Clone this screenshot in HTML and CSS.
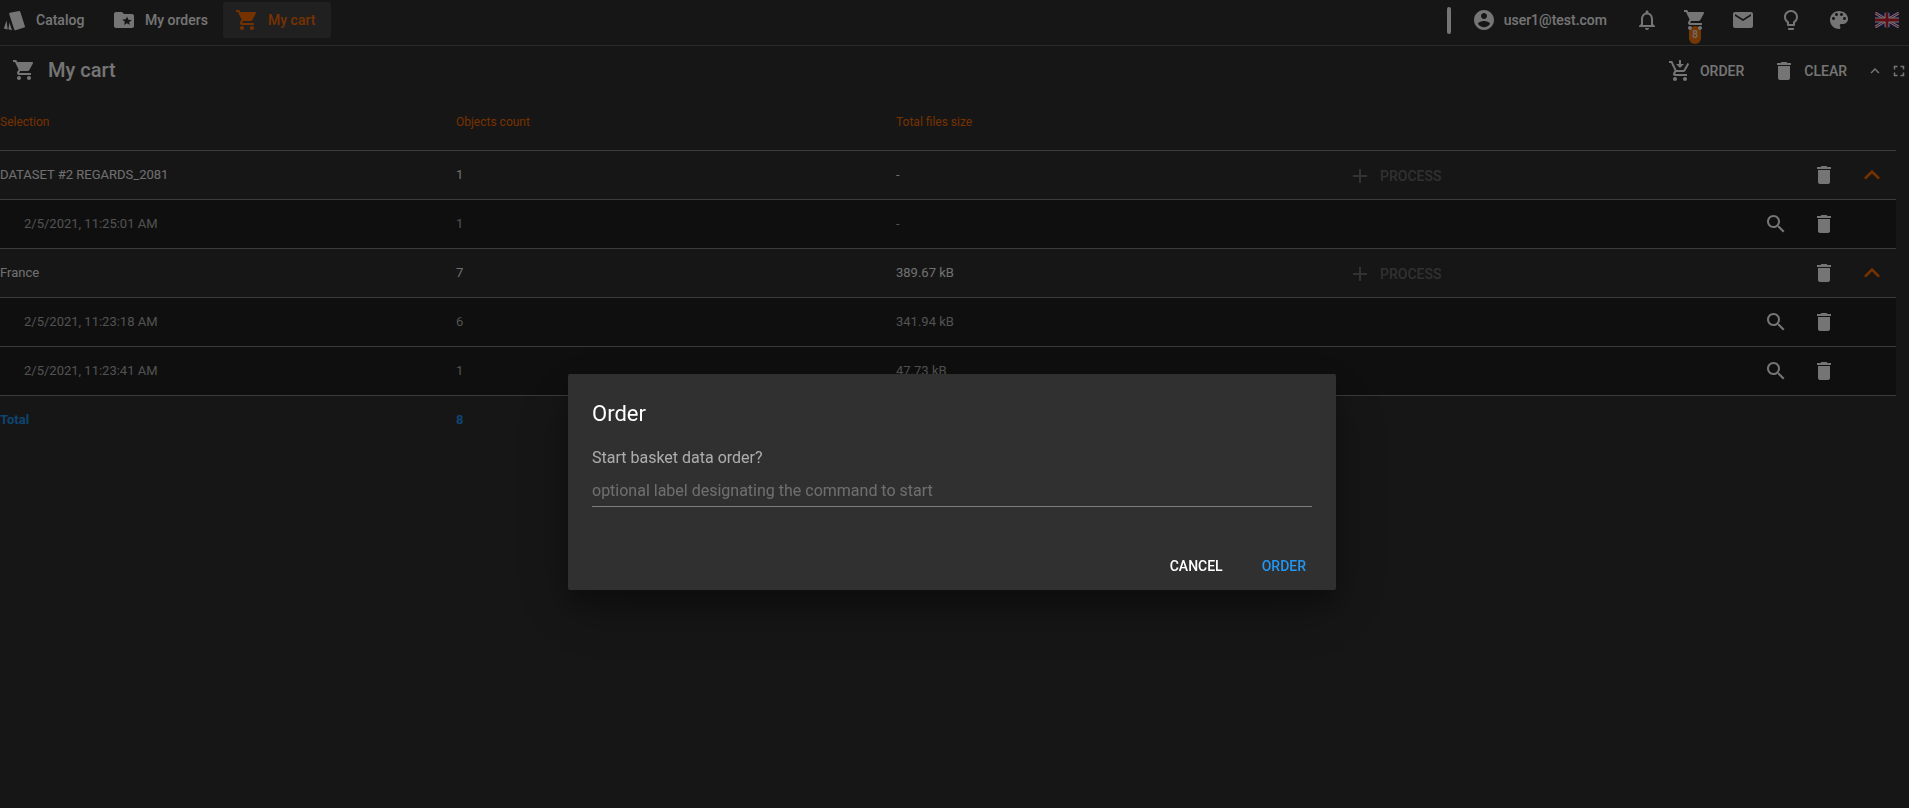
FILE: index.html
```html
<!DOCTYPE html>
<html lang="en">
<head>
  <meta charset="UTF-8">
  <meta name="viewport" content="width=device-width, initial-scale=1.0">
  <title>My cart</title>
  <link rel="stylesheet" href="styles.css">
</head>
<body>
  <svg class="sprite" xmlns="http://www.w3.org/2000/svg">
    <symbol id="i-cart" viewBox="0 0 24 24"><path d="M7 18c-1.1 0-1.99.9-1.99 2S5.9 22 7 22s2-.9 2-2-.9-2-2-2zM1 2v2h2l3.6 7.59-1.35 2.45c-.16.28-.25.61-.25.96 0 1.1.9 2 2 2h12v-2H7.42c-.14 0-.25-.11-.25-.25l.03-.12.9-1.63h7.45c.75 0 1.41-.41 1.75-1.03l3.58-6.49c.08-.14.12-.31.12-.48 0-.55-.45-1-1-1H5.21l-.94-2H1zm16 16c-1.1 0-1.99.9-1.99 2s.89 2 1.99 2 2-.9 2-2-.9-2-2-2z"/></symbol>
    <symbol id="i-folder" viewBox="0 0 24 24"><path d="M20 6h-8l-2-2H4c-1.1 0-1.99.9-1.99 2L2 18c0 1.1.9 2 2 2h16c1.1 0 2-.9 2-2V8c0-1.1-.9-2-2-2zm-2.06 11L15 15.28 12.06 17l.78-3.33-2.59-2.24 3.41-.29L15 8.5l1.34 3.14 3.41.29-2.59 2.24.78 3.33z"/></symbol>
    <symbol id="i-delete" viewBox="0 0 24 24"><path d="M6 19c0 1.1.9 2 2 2h8c1.1 0 2-.9 2-2V7H6v12zM19 4h-3.5l-1-1h-5l-1 1H5v2h14V4z"/></symbol>
    <symbol id="i-search" viewBox="0 0 24 24"><path d="M15.5 14h-.79l-.28-.27C15.41 12.59 16 11.11 16 9.5 16 5.91 13.09 3 9.5 3S3 5.91 3 9.5 5.91 16 9.5 16c1.61 0 3.09-.59 4.23-1.57l.27.28v.79l5 4.99L20.49 19l-4.99-5zm-6 0C7.01 14 5 11.99 5 9.5S7.01 5 9.5 5 14 7.01 14 9.5 11.99 14 9.5 14z"/></symbol>
    <symbol id="i-less" viewBox="0 0 24 24"><path d="M12 8l-6 6 1.41 1.41L12 10.83l4.59 4.58L18 14z"/></symbol>
    <symbol id="i-add" viewBox="0 0 24 24"><path d="M19 13h-6v6h-2v-6H5v-2h6V5h2v6h6v2z"/></symbol>
    <symbol id="i-account" viewBox="0 0 24 24"><path d="M12 2C6.48 2 2 6.48 2 12s4.48 10 10 10 10-4.48 10-10S17.52 2 12 2zm0 3c1.66 0 3 1.34 3 3s-1.34 3-3 3-3-1.34-3-3 1.34-3 3-3zm0 14.2c-2.5 0-4.71-1.28-6-3.22.03-1.99 4-3.08 6-3.08 1.99 0 5.97 1.09 6 3.08-1.29 1.94-3.5 3.22-6 3.22z"/></symbol>
    <symbol id="i-bell" viewBox="0 0 24 24"><path d="M12 22c1.1 0 2-.9 2-2h-4c0 1.1.9 2 2 2zm6-6v-5c0-3.07-1.63-5.64-4.5-6.32V4c0-.83-.67-1.5-1.5-1.5s-1.5.67-1.5 1.5v.68C7.64 5.36 6 7.92 6 11v5l-2 2v1h16v-1l-2-2zm-2 1H8v-6c0-2.48 1.51-4.5 4-4.5s4 2.02 4 4.5v6z"/></symbol>
    <symbol id="i-mail" viewBox="0 0 24 24"><path d="M20 4H4c-1.1 0-1.99.9-1.99 2L2 18c0 1.1.9 2 2 2h16c1.1 0 2-.9 2-2V6c0-1.1-.9-2-2-2zm0 4l-8 5-8-5V6l8 5 8-5v2z"/></symbol>
    <symbol id="i-bulb" viewBox="0 0 24 24"><path d="M9 21c0 .55.45 1 1 1h4c.55 0 1-.45 1-1v-1H9v1zm3-19C8.14 2 5 5.14 5 9c0 2.38 1.19 4.47 3 5.74V17c0 .55.45 1 1 1h6c.55 0 1-.45 1-1v-2.26c1.81-1.27 3-3.36 3-5.74 0-3.86-3.14-7-7-7zm2.85 11.1l-.85.6V16h-4v-2.3l-.85-.6C7.8 12.16 7 10.63 7 9c0-2.76 2.24-5 5-5s5 2.24 5 5c0 1.63-.8 3.16-2.15 4.1z"/></symbol>
    <symbol id="i-palette" viewBox="0 0 24 24"><path d="M12 3c-4.97 0-9 4.03-9 9s4.03 9 9 9c.83 0 1.5-.67 1.5-1.5 0-.39-.15-.74-.39-1.01-.23-.26-.38-.61-.38-.99 0-.83.67-1.5 1.5-1.5H16c2.76 0 5-2.24 5-5 0-4.42-4.03-8-9-8zm-5.5 9c-.83 0-1.5-.67-1.5-1.5S5.67 9 6.5 9 8 9.67 8 10.5 7.33 12 6.5 12zm3-4C8.67 8 8 7.33 8 6.5S8.67 5 9.5 5s1.5.67 1.5 1.5S10.33 8 9.5 8zm5 0c-.83 0-1.5-.67-1.5-1.5S13.67 5 14.5 5s1.5.67 1.5 1.5S15.33 8 14.5 8zm3 4c-.83 0-1.5-.67-1.5-1.5S16.67 9 17.5 9s1.5.67 1.5 1.5-.67 1.5-1.5 1.5z"/></symbol>
    <symbol id="i-cart-down" viewBox="0 0 24 24"><path d="M11 1h2v4h3l-4 4-4-4h3zM7 18c-1.1 0-1.99.9-1.99 2S5.9 22 7 22s2-.9 2-2-.9-2-2-2zm10 0c-1.1 0-1.99.9-1.99 2s.89 2 1.99 2 2-.9 2-2-.9-2-2-2zm-9.83-3.25l.03-.12.9-1.63h7.45c.75 0 1.41-.41 1.75-1.03l3.86-7.01L19.42 4h-.01l-1.1 2-2.76 5H8.53l-.13-.27L6.16 6l-.95-2-.94-2H1v2h2l3.6 7.59-1.35 2.45c-.16.28-.25.61-.25.96 0 1.1.9 2 2 2h12v-2H7.42c-.13 0-.25-.11-.25-.25z"/></symbol>
    <symbol id="i-fullscreen" viewBox="0 0 24 24"><path d="M7 14H5v5h5v-2H7v-3zm-2-4h2V7h3V5H5v5zm12 7h-3v2h5v-5h-2v3zM14 5v2h3v3h2V5h-5z"/></symbol>
    <symbol id="i-catalog" viewBox="0 0 24 24"><path d="M7 4.8l9-1.9c.6-.1 1.1.2 1.3.8l4.6 14.6c.2.6-.1 1.2-.7 1.3l-8.6 2.7c-.6.2-1.2-.1-1.4-.7L6.2 6.1c-.2-.6.2-1.2.8-1.3zM3.6 12.5L1 20c-.1.4.1.7.5.8l3.2.6zM6.4 14.4l-1 6.9 3.6 1z"/></symbol>
  </svg>

  <header class="topbar">
    <nav class="nav">
      <a class="nav-item nav-catalog"><svg class="icon"><use href="#i-catalog"/></svg>Catalog</a>
      <a class="nav-item nav-orders"><svg class="icon"><use href="#i-folder"/></svg>My orders</a>
      <a class="nav-item active"><svg class="icon"><use href="#i-cart"/></svg>My cart</a>
    </nav>
    <div class="tools">
      <span class="separator"></span>
      <span class="user"><svg class="icon"><use href="#i-account"/></svg>user1@test.com</span>
      <span class="tool"><svg class="icon"><use href="#i-bell"/></svg></span>
      <span class="tool"><span class="badge">8</span><svg class="icon cart-icon"><use href="#i-cart"/></svg></span>
      <span class="tool"><svg class="icon"><use href="#i-mail"/></svg></span>
      <span class="tool"><svg class="icon"><use href="#i-bulb"/></svg></span>
      <span class="tool"><svg class="icon"><use href="#i-palette"/></svg></span>
      <span class="tool">
        <svg class="flag" viewBox="0 0 60 36">
          <rect width="60" height="36" fill="#1f2f80"/>
          <path d="M0 0L60 36M60 0L0 36" stroke="#fff" stroke-width="7"/>
          <path d="M0 0L60 36M60 0L0 36" stroke="#d01c2e" stroke-width="2.5"/>
          <path d="M30 0V36M0 18H60" stroke="#fff" stroke-width="12"/>
          <path d="M30 0V36M0 18H60" stroke="#d01c2e" stroke-width="7"/>
        </svg>
      </span>
    </div>
  </header>

  <section class="title-bar">
    <h1 class="title"><svg class="icon"><use href="#i-cart"/></svg>My cart</h1>
    <div class="title-actions">
      <button class="flat"><svg class="icon"><use href="#i-cart-down"/></svg>Order</button>
      <button class="flat"><svg class="icon"><use href="#i-delete"/></svg>Clear</button>
      <svg class="icon-small"><use href="#i-less"/></svg>
      <svg class="icon-small"><use href="#i-fullscreen"/></svg>
    </div>
  </section>

  <main class="cart">
    <div class="row head">
      <span>Selection</span>
      <span>Objects count</span>
      <span>Total files size</span>
    </div>

    <div class="row group">
      <span>DATASET #2 REGARDS_2081</span>
      <span>1</span>
      <span>-</span>
      <button class="process"><svg class="icon"><use href="#i-add"/></svg>Process</button>
      <span></span>
      <span class="cell-icon"><svg class="icon"><use href="#i-delete"/></svg></span>
      <span class="cell-icon accent"><svg class="icon-large"><use href="#i-less"/></svg></span>
    </div>
    <div class="row sub">
      <span>2/5/2021, 11:25:01 AM</span>
      <span>1</span>
      <span>-</span>
      <span></span>
      <span class="cell-icon"><svg class="icon"><use href="#i-search"/></svg></span>
      <span class="cell-icon"><svg class="icon"><use href="#i-delete"/></svg></span>
    </div>

    <div class="row group">
      <span>France</span>
      <span>7</span>
      <span>389.67 kB</span>
      <button class="process"><svg class="icon"><use href="#i-add"/></svg>Process</button>
      <span></span>
      <span class="cell-icon"><svg class="icon"><use href="#i-delete"/></svg></span>
      <span class="cell-icon accent"><svg class="icon-large"><use href="#i-less"/></svg></span>
    </div>
    <div class="row sub">
      <span>2/5/2021, 11:23:18 AM</span>
      <span>6</span>
      <span>341.94 kB</span>
      <span></span>
      <span class="cell-icon"><svg class="icon"><use href="#i-search"/></svg></span>
      <span class="cell-icon"><svg class="icon"><use href="#i-delete"/></svg></span>
    </div>
    <div class="row sub">
      <span>2/5/2021, 11:23:41 AM</span>
      <span>1</span>
      <span>47.73 kB</span>
      <span></span>
      <span class="cell-icon"><svg class="icon"><use href="#i-search"/></svg></span>
      <span class="cell-icon"><svg class="icon"><use href="#i-delete"/></svg></span>
    </div>

    <div class="row total">
      <span>Total</span>
      <span>8</span>
    </div>
  </main>

  <!-- Modal -->
  <div class="overlay">
    <div class="dialog">
      <h2>Order</h2>
      <p>Start basket data order?</p>
      <input type="text" class="dialog-input" placeholder="optional label designating the command to start">
      <div class="dialog-actions">
        <button class="dialog-button">Cancel</button>
        <button class="dialog-button primary">Order</button>
      </div>
    </div>
  </div>
</body>
</html>
```

FILE: styles.css
```css
* {
  box-sizing: border-box;
}

body {
  margin: 0;
  height: 808px;
  overflow: hidden;
  background-color: #303030;
  color: #fff;
  font-family: Roboto, sans-serif;
  font-size: 13px;
}

.sprite {
  display: none;
}

.icon {
  width: 24px;
  height: 24px;
  fill: currentColor;
  flex: none;
}

.icon-small {
  width: 18px;
  height: 18px;
  fill: #fff;
  flex: none;
}

.icon-large {
  width: 32px;
  height: 32px;
  fill: currentColor;
  flex: none;
}

button {
  background: none;
  border: none;
  padding: 0;
  color: inherit;
  font-family: inherit;
}

/* Top bar */
.topbar {
  display: flex;
  justify-content: space-between;
  height: 46px;
  border-bottom: 1px solid #5e5e5e;
}

.nav {
  display: flex;
  align-items: flex-start;
  padding-top: 2px;
}

.nav-item {
  display: flex;
  align-items: center;
  gap: 9px;
  height: 36px;
  font-size: 14px;
  font-weight: 500;
  white-space: nowrap;
  color: #fff;
}

.nav-catalog {
  width: 112px;
  padding-left: 3px;
}

.nav-orders {
  width: 111px;
}

.nav-item.active {
  width: 108px;
  padding-left: 12px;
  border-radius: 2px;
  background-color: #464646;
  color: #ff6d00;
}

.tools {
  display: flex;
  align-items: center;
  margin-right: -2px;
  padding-bottom: 5px;
}

.separator {
  width: 4px;
  height: 27px;
  margin-right: 21px;
  border-radius: 2px;
  background-color: #fff;
}

.user {
  display: flex;
  align-items: center;
  gap: 8px;
  margin-right: 16px;
  font-size: 14px;
  font-weight: 500;
}

.tool {
  position: relative;
  display: flex;
  align-items: center;
  justify-content: center;
  width: 48px;
  height: 40px;
}

.flag {
  width: 24px;
  height: 16px;
}

.cart-icon {
  position: relative;
}

.badge {
  position: absolute;
  left: 18px;
  top: 26px;
  width: 12px;
  height: 18px;
  border-radius: 6px;
  background-color: #ff7a0a;
  color: #f0f0f0;
  font-size: 10px;
  font-weight: 500;
  line-height: 18px;
  text-align: center;
}

/* Title */
.title-bar {
  display: flex;
  justify-content: space-between;
  align-items: center;
  height: 48px;
}

.title {
  display: flex;
  align-items: center;
  gap: 12px;
  margin: 0;
  padding-left: 12px;
  font-size: 20px;
  font-weight: 500;
}

.title-actions {
  display: flex;
  align-items: center;
  padding-top: 1px;
  padding-right: 1px;
}

.flat {
  display: flex;
  align-items: center;
  gap: 8px;
  margin-right: 28px;
  font-size: 14px;
  font-weight: 500;
  text-transform: uppercase;
}

.flat + .flat {
  margin-right: 19px;
}

.icon-small + .icon-small {
  margin-left: 6px;
}

/* Cart table */
.cart {
  width: 1896px;
}

.row {
  display: grid;
  grid-template-columns: 456px 440px 440px 1fr 48px 48px 48px;
  align-items: center;
  height: 49px;
  border-bottom: 1px solid #808080;
}

.row > span {
  padding-bottom: 2px;
}

.row > .cell-icon,
.head > span {
  padding-bottom: 0;
}

.head {
  height: 57px;
  font-size: 12px;
  color: #ff6d00;
  padding-top: 1px;
  padding-bottom: 2px;
}

.group {
  color: #f2f2f2;
}

.sub {
  background-color: #212121;
  color: #b3b3b3;
}

.sub > span:first-child {
  padding-left: 24px;
}

.total {
  border-bottom: none;
  color: #2196f3;
  font-weight: 700;
}

.process {
  display: flex;
  align-items: center;
  gap: 8px;
  padding-left: 12px;
  padding-top: 2px;
  font-size: 14px;
  font-weight: 500;
  text-transform: uppercase;
  color: rgba(255, 255, 255, 0.3);
}

.cell-icon {
  display: flex;
  justify-content: center;
  color: #fff;
}

.accent {
  color: #ff6d00;
}

/* Dialog */
.overlay {
  position: fixed;
  top: 0;
  right: 0;
  bottom: 0;
  left: 0;
  display: flex;
  justify-content: center;
  align-items: flex-start;
  padding: 374px 5px 0 0;
  background-color: rgba(0, 0, 0, 0.54);
}

.dialog {
  width: 768px;
  height: 216px;
  padding: 25px 24px 6px;
  display: flex;
  flex-direction: column;
  border-radius: 2px;
  background-color: #303030;
  box-shadow: 0 19px 60px rgba(0, 0, 0, 0.3), 0 15px 20px rgba(0, 0, 0, 0.22);
}

.dialog h2 {
  margin: 0;
  font-size: 22px;
  font-weight: 400;
  line-height: 30px;
}

.dialog p {
  margin: 19px 0 0;
  font-size: 16px;
  line-height: 20px;
  color: rgba(255, 255, 255, 0.6);
}

.dialog-input {
  height: 39px;
  padding: 6px 0 0;
  background: none;
  border: none;
  border-bottom: 1px solid #7f7f7f;
  outline: none;
  color: #fff;
  font-family: inherit;
  font-size: 16px;
}

.dialog-input::placeholder {
  color: rgba(255, 255, 255, 0.3);
}

.dialog-actions {
  display: flex;
  justify-content: flex-end;
  gap: 23px;
  margin-top: auto;
  margin-right: -2px;
}

.dialog-button {
  height: 36px;
  padding: 0 8px;
  font-size: 14px;
  font-weight: 500;
  text-transform: uppercase;
}

.dialog-button.primary {
  color: #2196f3;
}
```
